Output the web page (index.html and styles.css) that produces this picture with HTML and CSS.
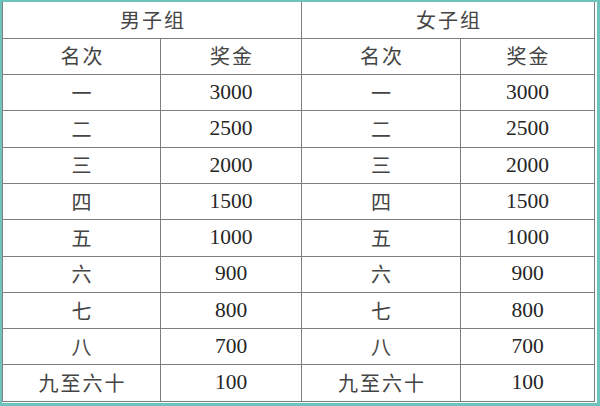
FILE: index.html
```html
<!DOCTYPE html>
<html lang="zh">
<head>
<meta charset="utf-8">
<title>奖金表</title>
<link rel="stylesheet" href="styles.css">
</head>
<body>
<div class="frame">
<table class="prize">
<colgroup>
<col class="c1"><col class="c2"><col class="c3"><col class="c4">
</colgroup>
<tr class="group"><td colspan="2" class="cn">男子组</td><td colspan="2" class="cn">女子组</td></tr>
<tr><td class="cn">名次</td><td class="cn">奖金</td><td class="cn">名次</td><td class="cn">奖金</td></tr>
<tr><td class="cn">一</td><td>3000</td><td class="cn">一</td><td>3000</td></tr>
<tr><td class="cn">二</td><td>2500</td><td class="cn">二</td><td>2500</td></tr>
<tr><td class="cn">三</td><td>2000</td><td class="cn">三</td><td>2000</td></tr>
<tr><td class="cn">四</td><td>1500</td><td class="cn">四</td><td>1500</td></tr>
<tr><td class="cn">五</td><td>1000</td><td class="cn">五</td><td>1000</td></tr>
<tr><td class="cn">六</td><td>900</td><td class="cn">六</td><td>900</td></tr>
<tr><td class="cn">七</td><td>800</td><td class="cn">七</td><td>800</td></tr>
<tr><td class="cn">八</td><td>700</td><td class="cn">八</td><td>700</td></tr>
<tr><td class="cn">九至六十</td><td>100</td><td class="cn">九至六十</td><td>100</td></tr>
</table>
</div>
</body>
</html>
```
FILE: styles.css
```css
html, body {
  margin: 0;
  padding: 0;
  background: #ffffff;
}
.frame {
  width: 600px;
  height: 406px;
  box-sizing: border-box;
  border-style: solid;
  border-color: #6cc4bc;
  border-width: 2px 3px 3px 2px;
  padding: 0 2px 1px 0;
  background: #ffffff;
}
.prize {
  width: 593px;
  border-collapse: collapse;
  table-layout: fixed;
  font-family: "Liberation Serif", "Noto Sans CJK SC", serif;
  font-size: 21.5px;
  color: #262626;
}
.c1 { width: 158px; }
.c2 { width: 141px; }
.c3 { width: 159px; }
.c4 { width: 134px; }
.prize tr {
  height: 36.3px;
}
.prize td {
  border: 1px solid #7f7f7f;
  text-align: center;
  vertical-align: middle;
  padding: 0;
  line-height: 1;
}
.prize tr.group td {
  border-top: none;
}
.prize td.cn {
  font-family: "Noto Sans CJK SC", sans-serif;
  font-size: 20px;
  letter-spacing: 2px;
  text-indent: 2px;
  color: #444444;
}
```
